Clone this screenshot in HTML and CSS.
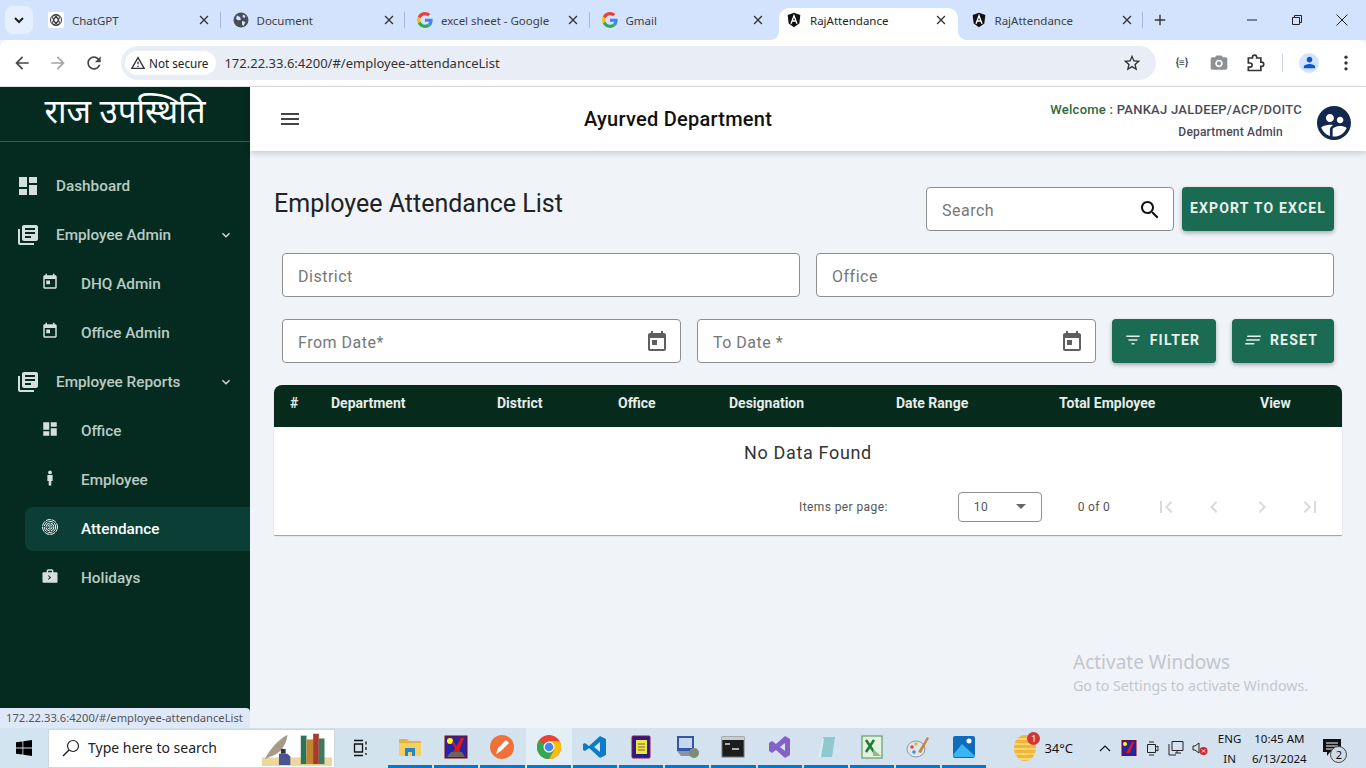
FILE: index.html
```html
<!DOCTYPE html>
<html lang="en">
<head>
    <meta charset="UTF-8">
    <title>RajAttendance</title>
    <link rel="stylesheet" href="styles.css">
</head>
<body>
    <svg class="sprite" aria-hidden="true">
        <symbol id="i-close" viewBox="0 0 16 16"><path d="M3.500 3.500l9 9M12.500 3.500l-9 9" stroke="currentColor" stroke-width="1.500" fill="none"/></symbol>
        <symbol id="i-google" viewBox="0 0 48 48"><path fill="#EA4335" d="M24 9.500c3.500 0 6.700 1.200 9.200 3.600l6.900-6.900C35.900 2.400 30.400 0 24 0 14.600 0 6.500 5.400 2.600 13.200l8 6.200C12.500 13.700 17.800 9.500 24 9.500z"/><path fill="#4285F4" d="M47 24.500c0-1.600-.1-3.100-.4-4.500H24v9h12.900c-.6 3-2.200 5.500-4.700 7.200l7.700 6C44.400 38 47 31.800 47 24.500z"/><path fill="#FBBC05" d="M10.600 28.600c-.5-1.400-.8-3-.8-4.600s.3-3.200.8-4.600l-8-6.200C.9 16.500 0 20.100 0 24s.9 7.500 2.600 10.800l8-6.200z"/><path fill="#34A853" d="M24 48c6.500 0 11.900-2.100 15.900-5.800l-7.700-6c-2.100 1.400-4.900 2.300-8.200 2.300-6.200 0-11.500-4.200-13.400-9.900l-8 6.200C6.500 42.600 14.600 48 24 48z"/></symbol>
        <symbol id="i-angular" viewBox="0 0 24 24"><path fill="#111" d="M12 1L2.500 4.400 4 17.400 12 23l8-5.600 1.500-13z"/><path d="M7.500 17.500L12 5.500l4.500 12M9.300 13.500h5.400" stroke="#fff" stroke-width="2" fill="none"/></symbol>
        <symbol id="i-today" viewBox="0 0 24 24"><path d="M19 3h-1V1h-2v2H8V1H6v2H5c-1.100 0-2 .9-2 2v14c0 1.100.9 2 2 2h14c1.100 0 2-.9 2-2V5c0-1.100-.9-2-2-2zm0 16H5V8h14v11zM7 10h5v5H7z"/></symbol>
        <symbol id="i-books" viewBox="0 0 24 24"><path d="M4 6H2v14c0 1.100.9 2 2 2h14v-2H4V6zm16-4H8c-1.100 0-2 .9-2 2v12c0 1.100.9 2 2 2h12c1.100 0 2-.9 2-2V4c0-1.100-.9-2-2-2zm-1 9H9V9h10v2zm-4 4H9v-2h6v2zm4-8H9V5h10v2z"/></symbol>
        <symbol id="i-dashboard" viewBox="0 0 24 24"><path d="M3 13h8V3H3v10zm0 8h8v-6H3v6zm10 0h8V11h-8v10zm0-18v6h8V3h-8z"/></symbol>
        <symbol id="i-more" viewBox="0 0 24 24"><path d="M16.590 8.590L12 13.170 7.410 8.590 6 10l6 6 6-6z"/></symbol>
    </svg>

    <!-- browser tabs -->
    <div class="tabstrip">
        <div class="tab-menu"><svg class="ic16" viewBox="0 0 16 16"><path d="M4 6l4 4 4-4" stroke="#1f1f1f" stroke-width="2" fill="none"/></svg></div>
        <div class="tab">
            <svg class="fav" viewBox="0 0 16 16"><rect width="16" height="16" rx="2" fill="#fff"/><g fill="none" stroke="#333" stroke-width="1"><circle cx="8" cy="8" r="5.500"/><circle cx="8" cy="8" r="2.500"/><ellipse cx="8" cy="8" rx="5" ry="2.200" transform="rotate(60 8 8)"/><ellipse cx="8" cy="8" rx="5" ry="2.200" transform="rotate(-60 8 8)"/></g></svg>
            <span class="tab-title">ChatGPT</span>
            <svg class="tab-x"><use href="#i-close"/></svg>
        </div>
        <div class="tab">
            <svg class="fav" viewBox="0 0 16 16"><circle cx="8" cy="8" r="7.500" fill="#4a4f57"/><path d="M4 3.500l3 1.500 1 2.500-2.500 1L3 7zM9 9l3.500 1-2 4-1.500-1.500zM10 2.500l2.500 1.500-1 2-2-1z" fill="#d3e3fd"/></svg>
            <span class="tab-title">Document</span>
            <svg class="tab-x"><use href="#i-close"/></svg>
        </div>
        <div class="tab">
            <svg class="fav"><use href="#i-google"/></svg>
            <span class="tab-title">excel sheet - Google</span>
            <svg class="tab-x"><use href="#i-close"/></svg>
        </div>
        <div class="tab">
            <svg class="fav"><use href="#i-google"/></svg>
            <span class="tab-title">Gmail</span>
            <svg class="tab-x"><use href="#i-close"/></svg>
        </div>
        <div class="tab tab-active">
            <svg class="fav"><use href="#i-angular"/></svg>
            <span class="tab-title">RajAttendance</span>
            <svg class="tab-x"><use href="#i-close"/></svg>
        </div>
        <div class="tab">
            <svg class="fav"><use href="#i-angular"/></svg>
            <span class="tab-title">RajAttendance</span>
            <svg class="tab-x"><use href="#i-close"/></svg>
        </div>
        <svg class="tab-plus" viewBox="0 0 16 16"><path d="M8 2v12M2 8h12" stroke="#333" stroke-width="1.600"/></svg>
        <div class="win-btns">
            <svg class="ic16" viewBox="0 0 16 16"><path d="M3 8h10" stroke="#222" stroke-width="1"/></svg>
            <svg class="ic16" viewBox="0 0 16 16"><path d="M3.500 5.500h7v7h-7zM5.500 5.500v-2h7v7h-2" stroke="#222" stroke-width="1" fill="none"/></svg>
            <svg class="ic16" viewBox="0 0 16 16"><path d="M2.500 2.500l11 11M13.500 2.500l-11 11" stroke="#222" stroke-width="1"/></svg>
        </div>
    </div>

    <!-- address bar -->
    <div class="toolbar">
        <svg class="tb-icon" viewBox="0 0 24 24"><path fill="#474747" d="M20 11H7.830l5.590-5.590L12 4l-8 8 8 8 1.410-1.410L7.830 13H20v-2z"/></svg>
        <svg class="tb-icon" viewBox="0 0 24 24"><path fill="#a3a6ab" d="M12 4l-1.410 1.410L16.170 11H4v2h12.170l-5.580 5.590L12 20l8-8z"/></svg>
        <svg class="tb-icon" viewBox="0 0 24 24"><path fill="#474747" d="M17.650 6.350C16.200 4.900 14.210 4 12 4c-4.420 0-7.990 3.580-7.990 8s3.570 8 7.990 8c3.730 0 6.840-2.550 7.730-6h-2.080c-.82 2.330-3.040 4-5.650 4-3.310 0-6-2.690-6-6s2.690-6 6-6c1.660 0 3.140.69 4.220 1.780L13 11h7V4l-2.350 2.350z"/></svg>
        <div class="omnibox">
            <div class="chip">
                <svg class="ic16" viewBox="0 0 24 24"><path fill="#333" d="M12 5.990L19.530 19H4.470L12 5.990M12 2L1 21h22L12 2zm1 14h-2v2h2v-2zm0-6h-2v4h2v-4z"/></svg>
                <span>Not secure</span>
            </div>
            <span class="url">172.22.33.6:4200/#/employee-attendanceList</span>
            <svg class="star" viewBox="0 0 24 24"><path fill="#333" d="M22 9.240l-7.190-.62L12 2 9.190 8.630 2 9.240l5.460 4.730L5.820 21 12 17.270 18.180 21l-1.630-7.030L22 9.240zM12 15.400l-3.760 2.270 1-4.280-3.320-2.880 4.380-.38L12 6.100l1.710 4.040 4.380.38-3.320 2.880 1 4.280L12 15.400z"/></svg>
        </div>
        <div class="tb-right">
            <span class="ext-json">{≡}</span>
            <svg class="ic20" viewBox="0 0 24 24"><path fill="#8d9094" d="M9 3L7.170 5H4c-1.100 0-2 .9-2 2v11c0 1.100.9 2 2 2h16c1.100 0 2-.9 2-2V7c0-1.100-.9-2-2-2h-3.170L15 3H9zm3 14c-2.480 0-4.500-2.020-4.500-4.500S9.520 8 12 8s4.500 2.020 4.500 4.500S14.480 17 12 17zm0-7a2.500 2.500 0 100 5 2.500 2.500 0 000-5z"/></svg>
            <svg class="ic20" viewBox="0 0 24 24"><path fill="none" stroke="#333" stroke-width="2" d="M4 6h5V5a2.500 2.500 0 015 0v1h5v5h1a2.500 2.500 0 010 5h-1v5H4v-4h2a2.500 2.500 0 000-5H4z"/></svg>
            <span class="tb-sep"></span>
            <span class="profile"><svg class="ic20" viewBox="0 0 24 24"><path fill="#0b57d0" d="M12 12c2.210 0 4-1.790 4-4s-1.790-4-4-4-4 1.790-4 4 1.790 4 4 4zm0 2c-2.670 0-8 1.340-8 4v2h16v-2c0-2.660-5.330-4-8-4z"/></svg></span>
            <svg class="ic20" viewBox="0 0 24 24"><g fill="#333"><circle cx="12" cy="5" r="2"/><circle cx="12" cy="12" r="2"/><circle cx="12" cy="19" r="2"/></g></svg>
        </div>
    </div>

    <div class="app">
        <aside class="sidebar">
            <div class="logo">राज उपस्थिति</div>
            <nav class="nav">
                <a class="nav-item"><svg class="nav-ic"><use href="#i-dashboard"/></svg>Dashboard</a>
                <a class="nav-item"><svg class="nav-ic"><use href="#i-books"/></svg>Employee Admin<svg class="nav-more"><use href="#i-more"/></svg></a>
                <a class="nav-item sub"><svg class="sub-ic"><use href="#i-today"/></svg>DHQ Admin</a>
                <a class="nav-item sub"><svg class="sub-ic"><use href="#i-today"/></svg>Office Admin</a>
                <a class="nav-item"><svg class="nav-ic"><use href="#i-books"/></svg>Employee Reports<svg class="nav-more"><use href="#i-more"/></svg></a>
                <a class="nav-item sub"><svg class="sub-ic"><use href="#i-dashboard"/></svg>Office</a>
                <a class="nav-item sub"><svg class="sub-ic" viewBox="0 0 24 24"><circle cx="12" cy="4.500" r="2.500"/><path d="M8.500 8h7v8h-1.800v6h-3.400v-6H8.500z"/></svg>Employee</a>
                <a class="nav-item sub active"><svg class="sub-ic" viewBox="0 0 24 24"><g fill="none" stroke="currentColor" stroke-width="1.300" stroke-dasharray="7 1.200"><circle cx="12" cy="12" r="10"/><circle cx="12" cy="12" r="7.600"/><circle cx="12" cy="12" r="5.200"/><circle cx="12" cy="12" r="2.800"/></g><circle cx="12" cy="12" r="1"/></svg>Attendance</a>
                <a class="nav-item sub"><svg class="sub-ic" viewBox="0 0 24 24"><path d="M9 3h6l1.500 1.500V7H21a1 1 0 011 1v12a1 1 0 01-1 1H3a1 1 0 01-1-1V8a1 1 0 011-1h4.500V4.500zm.500 2v2h5V5zM10 11l3.500 3-3.500 3-.8-.8 2.200-2.200-2.200-2.200z" fill-rule="evenodd"/></svg>Holidays</a>
            </nav>
        </aside>

        <div class="content">
            <header class="topbar">
                <svg class="menu-btn" viewBox="0 0 24 24"><path d="M3 18h18v-2H3v2zm0-5h18v-2H3v2zm0-7v2h18V6H3z"/></svg>
                <div class="dept">Ayurved Department</div>
                <div class="user">
                    <div class="user-name"><span class="welcome">Welcome :</span> PANKAJ JALDEEP/ACP/DOITC</div>
                    <div class="user-role">Department Admin</div>
                </div>
                <svg class="avatar" viewBox="2 2 20 20"><path d="M11.990 2c-5.520 0-10 4.480-10 10s4.480 10 10 10 10-4.480 10-10-4.480-10-10-10zm3.610 6.340c1.070 0 1.930.86 1.930 1.930 0 1.070-.86 1.930-1.930 1.930-1.070 0-1.930-.86-1.930-1.930-.01-1.070.86-1.930 1.930-1.930zm-6-1.580c1.300 0 2.360 1.060 2.360 2.360 0 1.300-1.060 2.360-2.360 2.360s-2.360-1.060-2.360-2.360c0-1.310 1.050-2.360 2.360-2.360zm0 9.130v3.750c-2.400-.75-4.300-2.600-5.140-4.960 1.050-1.120 3.670-1.690 5.140-1.690.53 0 1.200.08 1.900.22-1.640.87-1.900 2.020-1.900 2.680zM11.990 20c-.27 0-.53-.01-.79-.04v-4.070c0-1.420 2.940-2.130 4.400-2.130 1.070 0 2.920.39 3.840 1.150-1.170 2.970-4.060 5.090-7.450 5.090z"/></svg>
            </header>

            <main class="page">
                <div class="page-head">
                    <h1>Employee Attendance List</h1>
                    <div class="field search-field">
                        <span>Search</span>
                        <svg class="field-ic dark" viewBox="0 0 24 24"><path d="M15.500 14h-.79l-.28-.27C15.410 12.590 16 11.110 16 9.500 16 5.910 13.090 3 9.500 3S3 5.910 3 9.500 5.910 16 9.500 16c1.610 0 3.090-.59 4.230-1.570l.27.28v.79l5 4.990L20.490 19l-4.990-5zm-6 0C7.010 14 5 11.990 5 9.500S7.010 5 9.500 5 14 7.010 14 9.500 11.990 14 9.500 14z"/></svg>
                    </div>
                    <button class="btn btn-export">EXPORT TO EXCEL</button>
                </div>
                <div class="filters">
                    <div class="field"><span>District</span></div>
                    <div class="field"><span>Office</span></div>
                </div>
                <div class="filters">
                    <div class="field"><span>From Date*</span><svg class="field-ic"><use href="#i-today"/></svg></div>
                    <div class="field"><span>To Date *</span><svg class="field-ic"><use href="#i-today"/></svg></div>
                    <button class="btn btn-filter"><svg class="btn-ic" viewBox="0 0 24 24"><path d="M10 18h4v-2h-4v2zM3 6v2h18V6H3zm3 7h12v-2H6v2z"/></svg>FILTER</button>
                    <button class="btn btn-reset"><svg class="btn-ic" viewBox="0 0 24 24"><path d="M3 18h12v-2H3v2zM3 6v2h18V6H3zm0 7h18v-2H3v2z"/></svg>RESET</button>
                </div>

                <div class="table-card">
                    <table class="data-table">
                        <thead>
                            <tr>
                                <th>#</th>
                                <th>Department</th>
                                <th>District</th>
                                <th>Office</th>
                                <th>Designation</th>
                                <th>Date Range</th>
                                <th>Total Employee</th>
                                <th>View</th>
                            </tr>
                        </thead>
                        <tbody>
                            <tr><td colspan="8">No Data Found</td></tr>
                        </tbody>
                    </table>
                    <div class="paginator">
                        <span class="pg-label">Items per page:</span>
                        <div class="pg-select"><span>10</span><i class="caret"></i></div>
                        <span class="pg-range">0 of 0</span>
                        <div class="pg-btns">
                            <svg viewBox="0 0 24 24"><path d="M18.410 16.590L13.820 12l4.590-4.590L17 6l-6 6 6 6zM6 6h2v12H6z"/></svg>
                            <svg viewBox="0 0 24 24"><path d="M15.410 7.410L14 6l-6 6 6 6 1.410-1.410L10.830 12z"/></svg>
                            <svg viewBox="0 0 24 24"><path d="M10 6L8.590 7.410 13.170 12l-4.580 4.590L10 18l6-6z"/></svg>
                            <svg viewBox="0 0 24 24"><path d="M5.590 7.410L10.180 12l-4.590 4.590L7 18l6-6-6-6zM16 6h2v12h-2z"/></svg>
                        </div>
                    </div>
                </div>
            </main>
        </div>

        <div class="status-bubble">172.22.33.6:4200/#/employee-attendanceList</div>
        <div class="watermark">
            <div class="wm-big">Activate Windows</div>
            <div>Go to Settings to activate Windows.</div>
        </div>
    </div>

    <!-- windows taskbar -->
    <div class="taskbar">
        <div class="start"><svg class="ic16" viewBox="0 0 16 16"><path fill="#000" d="M0 2.300l6.500-.9v6.200H0zM7.300 1.300L16 0v7.600H7.300zM0 8.400h6.500v6.200L0 13.700zM7.300 8.400H16V16l-8.700-1.300z"/></svg></div>
        <div class="tb-search">
            <svg class="ic20" viewBox="0 0 20 20"><circle cx="12" cy="8" r="5.500" fill="none" stroke="#222" stroke-width="1.200"/><path d="M8 12l-6 6" stroke="#222" stroke-width="1.400"/></svg>
            <span>Type here to search</span>
            <svg class="books" viewBox="0 0 74 39">
                <rect y="30" width="74" height="9" fill="#ecd7a0"/>
                <path d="M3 32C8 22 16 12 27 6c-1 10-7 20-18 23z" fill="#a89a88"/>
                <path d="M18 26h9l3 3v9H18z" fill="#4a5590"/><rect x="20" y="21" width="5" height="5" fill="#333"/>
                <rect x="41" y="7" width="6" height="30" fill="#2d7358"/><rect x="47" y="11" width="7" height="26" fill="#c2842f"/>
                <rect x="54" y="5" width="6" height="32" fill="#a93a2e"/><rect x="60" y="10" width="6" height="27" fill="#3a7a5e"/>
            </svg>
        </div>
        <div class="task-view"><svg class="ic20" viewBox="0 0 20 20"><path d="M4 2.500h9M4 17.500h9M4.500 6h8v8h-8z M16 3.500v3M16 9v3M16 15v2" stroke="#111" stroke-width="1.300" fill="none"/></svg></div>
        <div class="apps">
            <div class="app-ic run"><svg viewBox="0 0 24 24"><path fill="#e8b33f" d="M1 4h8l2 2h12v15H1z"/><path fill="#f5cf62" d="M1 8h22v13H1z"/><path fill="#1e88c9" d="M7 13h10v8h-3v-4h-4v4H7z"/></svg></div>
            <div class="app-ic run"><svg viewBox="0 0 24 24"><rect x="1" y="1" width="22" height="22" fill="#2525a8" stroke="#900"/><circle cx="6" cy="6" r="3" fill="#ff0"/><path d="M8 19L17 3h3l-6 16z" fill="#e01818"/><path d="M9 6l8 12h-3L8 8z" fill="#e01818"/><path d="M3 22l4-5h11l3 5z" fill="#666"/></svg></div>
            <div class="app-ic run"><svg viewBox="0 0 24 24"><circle cx="12" cy="12" r="12" fill="#f0703a"/><path d="M6 19l2-6 8-8 3 3-8 8z" fill="#fff"/></svg></div>
            <div class="app-ic run on"><svg viewBox="0 0 24 24"><circle cx="12" cy="12" r="12" fill="#ea4335"/><path d="M12 12L1.600 18A12 12 0 012 5.500z" fill="#34a853"/><path d="M12 24A12 12 0 011.600 18L7 9l5 3 5.200 3z" fill="#34a853"/><path d="M12 24a12 12 0 0010.400-18H12l5.200 9z" fill="#fbbc05"/><circle cx="12" cy="12" r="5.500" fill="#fff"/><circle cx="12" cy="12" r="4.300" fill="#4285f4"/></svg></div>
            <div class="app-ic run"><svg viewBox="0 0 24 24"><path fill="#0a7cc8" d="M17 1l6 3v16l-6 3L6 13l-4 3-2-1V9l2-1 4 3zm0 6l-6 5 6 5z"/></svg></div>
            <div class="app-ic run"><svg viewBox="0 0 24 24"><rect x="3" y="1" width="18" height="22" rx="1" fill="#20208c" stroke="#a01040"/><rect x="7" y="5" width="11" height="14" fill="#f5e23a"/><path d="M9 9h7M9 12h7M9 15h7" stroke="#665" stroke-width="1"/></svg></div>
            <div class="app-ic run"><svg viewBox="0 0 24 24"><rect x="2" y="1" width="17" height="15" fill="#3358a8"/><rect x="4" y="3" width="13" height="10" fill="#c7d6f2"/><path d="M2 16h14l3 5H6z" fill="#8a93a5"/><circle cx="19" cy="18" r="5" fill="#7d8c76"/></svg></div>
            <div class="app-ic run"><svg viewBox="0 0 24 24"><rect x="1" y="2" width="22" height="20" fill="#1d1d1d" stroke="#777"/><path d="M1 2h22v3H1z" fill="#ccc"/><path d="M4 9h5M11 14h7" stroke="#ddd" stroke-width="1.500"/></svg></div>
            <div class="app-ic run"><svg viewBox="0 0 24 24"><path fill="#8661c5" d="M17 1l5 3v16l-5 3-9-8-4 3-3-2V8l3-2 4 3zm0 7l-5 4 5 4z"/></svg></div>
            <div class="app-ic run"><svg viewBox="0 0 24 24"><path fill="#8fc9cf" d="M8 2h13l-3 20H3z"/><path fill="#d9edf0" d="M8 2l2 2-3 18H3z"/></svg></div>
            <div class="app-ic run"><svg viewBox="0 0 24 24"><rect x="2" y="1" width="20" height="22" fill="#e4f1df" stroke="#4b8f4b"/><path d="M6 5l8 12M14 5L6 17" stroke="#1b7a35" stroke-width="2.500"/><path d="M13 14l8 7h-8z" fill="#8fb98f"/></svg></div>
            <div class="app-ic run"><svg viewBox="0 0 24 24"><ellipse cx="10" cy="14" rx="9" ry="8" fill="#dfe6ee" stroke="#8a9aac"/><circle cx="6" cy="12" r="1.800" fill="#d94a3a"/><circle cx="10" cy="9" r="1.800" fill="#e8b33f"/><circle cx="8" cy="17" r="1.800" fill="#3f8fd9"/><path d="M12 17L21 2l2 1-8 15z" fill="#c58a3a"/></svg></div>
            <div class="app-ic run"><svg viewBox="0 0 24 24"><rect x="1" y="1" width="22" height="22" rx="2" fill="#0f6cbd"/><path d="M1 20l9-11 13 12v1H3z" fill="#3bb5ef"/><circle cx="17" cy="6" r="2.500" fill="#fff"/></svg></div>
        </div>
        <div class="weather">
            <span class="wx-ic"><i class="wx-badge">1</i></span>
            <span>34°C</span>
        </div>
        <div class="tray">
            <svg class="tray-ic" viewBox="0 0 16 16"><path d="M3 11l5-5 5 5" fill="none" stroke="#111" stroke-width="1.200"/></svg>
            <svg class="tray-ic" viewBox="0 0 16 16"><rect x="1" y="0" width="14" height="16" fill="#2525a8" stroke="#900"/><circle cx="4" cy="4" r="2" fill="#ff0"/><path d="M5 13l6-11h2l-4 11z" fill="#e01818"/></svg>
            <svg class="tray-ic" viewBox="0 0 16 16"><path d="M3.500 4.500h8v8h-8zM5 2h5M5 15h5M12 7l2-1v5l-2-1" fill="none" stroke="#222"/></svg>
            <svg class="tray-ic" viewBox="0 0 16 16"><path d="M4 1.500h11v9H4zM1 4v11M1 15h7M7 13h6M9 11v2" fill="none" stroke="#222"/></svg>
            <svg class="tray-ic" viewBox="0 0 16 16"><path d="M1 6h2l4-3v10L3 10H1z" fill="none" stroke="#222"/><circle cx="11.500" cy="11" r="4" fill="#d8232a"/><path d="M10 9.500l3 3M13 9.500l-3 3" stroke="#fff"/></svg>
        </div>
        <div class="lang"><div>ENG</div><div>IN</div></div>
        <div class="clock"><div>10:45 AM</div><div>6/13/2024</div></div>
        <div class="notif">
            <svg class="ic20" viewBox="0 0 20 20"><path d="M1 1h18v13H8l-3 4v-4H1z" fill="#111"/><path d="M4 5h12M4 8h12M4 11h8" stroke="#fff"/></svg>
            <span class="notif-count">2</span>
        </div>
    </div>
</body>
</html>
```

FILE: styles.css
```css
* {
    box-sizing: border-box;
}
html, body {
    margin: 0;
    height: 100%;
    overflow: hidden;
}
body {
    display: flex;
    flex-direction: column;
    width: 1366px;
    height: 768px;
    font-family: Roboto, "Noto Sans", sans-serif;
    background-color: #f0f3f8;
}
.sprite {
    display: none;
}
.ic16 {
    width: 16px;
    height: 16px;
    flex: none;
}
.ic20 {
    width: 20px;
    height: 20px;
    flex: none;
}

/* tab strip */
.tabstrip {
    display: flex;
    align-items: flex-end;
    height: 40px;
    background-color: #d3e3fd;
    font-family: "Noto Sans", sans-serif;
    font-size: 11.5px;
    color: #3c4043;
}
.tab-menu {
    display: flex;
    align-items: center;
    justify-content: center;
    width: 28px;
    height: 28px;
    margin: 0 3px 6px 5px;
    background-color: #e6effd;
    border-radius: 8px;
}
.tab {
    display: flex;
    align-items: center;
    width: 184.5px;
    height: 32px;
    padding: 0 9.5px 8px 12px;
    position: relative;
    flex: none;
}
.tab::after {
    content: "";
    position: absolute;
    right: 0;
    top: 4px;
    height: 16px;
    width: 1px;
    background-color: #a3b8d9;
}
.tab-active {
    width: 179px;
    margin: 0 0.5px 0 5px;
    padding-left: 7px;
    padding-right: 10px;
    background-color: #fff;
    border-radius: 10px 10px 0 0;
    color: #1f1f1f;
}
.tab:nth-child(5)::after {
    display: none;
}
/* little flares at the foot of the active tab */
.tab-active::before,
.tab-active::after {
    content: "";
    display: block;
    position: absolute;
    top: auto;
    bottom: 0;
    width: 8px;
    height: 8px;
    background: radial-gradient(circle at 0 0, transparent 7.5px, #fff 8px);
}
.tab-active::before {
    left: -8px;
}
.tab-active::after {
    right: -8px;
    background: radial-gradient(circle at 100% 0, transparent 7.5px, #fff 8px);
}
.fav {
    width: 16px;
    height: 16px;
    flex: none;
    margin-right: 8px;
}
.tab-title {
    flex: 1;
    overflow: hidden;
    white-space: nowrap;
}
.tab-x {
    width: 14px;
    height: 14px;
    flex: none;
    margin-left: 4px;
    color: #333;
}
.tab-plus {
    width: 14px;
    height: 14px;
    margin: 0 0 13px 10px;
}
.win-btns {
    display: flex;
    gap: 29px;
    margin: 0 0 12px auto;
    padding-right: 16px;
}

/* address bar */
.toolbar {
    display: flex;
    align-items: center;
    height: 47px;
    padding: 0 12px 1px 12px;
    background-color: #fff;
    border-bottom: 1px solid #dfe1e5;
    border-radius: 8px 8px 0 0;
}
.tb-icon {
    width: 20px;
    height: 20px;
    flex: none;
    margin-right: 16px;
}
.omnibox {
    display: flex;
    align-items: center;
    flex: none;
    width: 1035px;
    height: 34px;
    margin-left: 1px;
    padding: 0 14px 0 4px;
    background-color: #e9edf6;
    border-radius: 17px;
}
.chip {
    display: flex;
    align-items: center;
    gap: 3px;
    height: 24px;
    padding: 0 8px 0 5px;
    background-color: #fff;
    border-radius: 12px;
    font-family: "Noto Sans", sans-serif;
    font-size: 11.7px;
    color: #222;
}
.url {
    margin-left: 8px;
    font-family: "Noto Sans", sans-serif;
    font-size: 13px;
    color: #333;
}
.star {
    width: 20px;
    height: 20px;
    margin-left: auto;
}
.tb-right {
    display: flex;
    align-items: center;
    margin-left: 16px;
    gap: 16.5px;
}
.ext-json {
    width: 20px;
    font-size: 10px;
    font-weight: 700;
    color: #444;
    text-align: center;
}
.tb-sep {
    width: 1px;
    height: 18px;
    background-color: #c9d6ea;
}
.profile {
    display: flex;
    align-items: center;
    justify-content: center;
    width: 20px;
    height: 20px;
    background-color: #d3e3fd;
    border-radius: 50%;
}
.profile .ic20 {
    width: 17px;
    height: 17px;
}

/* app */
.app {
    display: flex;
    flex: 1;
    min-height: 0;
    position: relative;
}
.sidebar {
    width: 250px;
    flex: none;
    background-color: #052b20;
}
.logo {
    height: 55px;
    border-bottom: 1px solid #3d5a50;
    font-family: "Noto Sans", "Noto Sans CJK SC", sans-serif;
    font-size: 33px;
    line-height: 48px;
    color: #fff;
    text-align: center;
}
.nav {
    display: flex;
    flex-direction: column;
    gap: 5px;
    padding: 22px 0 0 0;
}
.nav-item {
    display: flex;
    align-items: center;
    height: 44px;
    padding-left: 16px;
    font-size: 15.3px;
    font-weight: 500;
    color: #b9cbc5;
    fill: #d5dfdc;
}
.nav-item.sub {
    margin-left: 25px;
    padding-left: 16px;
    border-radius: 8px 0 0 8px;
}
.nav-item.active {
    background-color: #0b3f35;
    color: #fff;
    fill: #fff;
}
.nav-ic {
    width: 24px;
    height: 24px;
    flex: none;
    margin-right: 16px;
}
.sub-ic {
    width: 18px;
    height: 18px;
    flex: none;
    margin: -4px 22px 0 0;
    color: #fff;
}
.nav-more {
    width: 16px;
    height: 16px;
    margin-left: auto;
    margin-right: 16px;
}

.content {
    display: flex;
    flex-direction: column;
    flex: 1;
    min-width: 0;
}
.topbar {
    display: flex;
    align-items: center;
    flex: none;
    height: 64px;
    padding-left: 28px;
    background-color: #fff;
    box-shadow: 0 2px 6px rgba(0, 0, 0, .18);
    position: relative;
}
.menu-btn {
    width: 24px;
    height: 24px;
    fill: #444;
}
.dept {
    margin-left: 282px;
    font-size: 20px;
    font-weight: 500;
    color: #111;
    letter-spacing: .25px;
}
.user {
    margin-left: auto;
    padding-top: 3px;
    font-size: 13px;
    font-weight: 500;
    color: #4a4a55;
    letter-spacing: .25px;
    text-align: right;
}
.user-name {
    margin-bottom: 8px;
}
.welcome {
    color: #2c6a3a;
}
.user-role {
    padding-right: 19px;
    font-size: 12px;
    letter-spacing: .2px;
}
.avatar {
    width: 34px;
    height: 34px;
    margin: 8px 15px 0 15px;
    fill: #14284f;
}

.page {
    flex: 1;
    padding: 36px 24px 0 24px;
}
.page-head {
    display: flex;
    align-items: flex-start;
    margin-bottom: 22px;
    padding-right: 8px;
}
.page-head h1 {
    flex: 1;
    margin: 0;
    font-size: 25px;
    font-weight: 400;
    line-height: 34px;
    color: #222;
}
.field {
    display: flex;
    align-items: center;
    flex: 1;
    height: 44px;
    padding: 2px 11px 0 15px;
    background-color: #fff;
    border: 1px solid #8f8f8f;
    border-radius: 4px;
    font-size: 16px;
    letter-spacing: .5px;
    color: #777;
}
.field span {
    flex: 1;
}
.search-field {
    flex: none;
    width: 248px;
    margin-right: 8px;
}
.field-ic {
    width: 24px;
    height: 24px;
    fill: #5f5f5f;
}
.field-ic.dark {
    fill: #111;
}
.filters {
    display: flex;
    gap: 16px;
    margin: 0 8px 22px 8px;
}
.btn {
    display: flex;
    align-items: center;
    justify-content: center;
    flex: none;
    height: 44px;
    padding: 0 0 2px 0;
    background-color: #1b6b52;
    border: 0;
    border-radius: 4px;
    box-shadow: 0 2px 4px rgba(0, 0, 0, .3);
    font-family: Roboto, sans-serif;
    font-size: 14px;
    font-weight: 700;
    letter-spacing: 1.2px;
    color: #e8f0ed;
}
.btn-export {
    width: 152px;
}
.btn-filter {
    width: 104px;
    padding-right: 4px;
}
.btn-reset {
    width: 102px;
    padding-right: 4px;
}
.btn-ic {
    width: 18px;
    height: 18px;
    margin-right: 8px;
    fill: #e8f0ed;
}
.btn-reset .btn-ic {
    transform: skewX(-15deg);
}

.table-card {
    height: 150px;
    background-color: #fff;
    border-radius: 8px 8px 0 0;
    box-shadow: 0 1px 1px rgba(0, 0, 0, .35);
}
.data-table {
    width: 100%;
    border-collapse: collapse;
    table-layout: fixed;
}
.data-table th {
    height: 42px;
    padding: 0 0 6px 16px;
    background-color: #062b1d;
    font-size: 14px;
    font-weight: 700;
    color: #e6ece9;
    text-align: left;
}
.data-table th:first-child {
    border-top-left-radius: 8px;
}
.data-table th:last-child {
    border-top-right-radius: 8px;
}
.data-table th:nth-child(1) { width: 41px; }
.data-table th:nth-child(2) { width: 166px; }
.data-table th:nth-child(3) { width: 121px; }
.data-table th:nth-child(4) { width: 111px; }
.data-table th:nth-child(5) { width: 167px; }
.data-table th:nth-child(6) { width: 163px; }
.data-table th:nth-child(7) { width: 201px; }
.data-table th:nth-child(8) { width: 98px; }
.data-table td {
    height: 51px;
    padding: 0 0 1px 0;
    font-size: 18px;
    letter-spacing: .65px;
    color: #333;
    text-align: center;
}
.paginator {
    display: flex;
    align-items: center;
    justify-content: flex-end;
    height: 57px;
    padding: 0 8px 0 0;
    font-size: 12px;
    color: #555;
}
.pg-label {
    letter-spacing: .4px;
    margin-right: 70px;
}
.pg-select {
    display: flex;
    align-items: center;
    justify-content: space-between;
    width: 84px;
    height: 30px;
    padding: 0 15px;
    border: 1px solid #8f8f8f;
    border-radius: 4px;
    letter-spacing: .4px;
}
.caret {
    width: 0;
    height: 0;
    border-left: 5px solid transparent;
    border-right: 5px solid transparent;
    border-top: 5px solid #666;
}
.pg-range {
    margin: 0 32px 0 36px;
    letter-spacing: .3px;
}
.pg-btns {
    display: flex;
}
.pg-btns svg {
    width: 24px;
    height: 24px;
    margin: 0 12px;
    fill: #d8dadc;
}

/* overlays */
.status-bubble {
    position: absolute;
    left: 0;
    bottom: 0;
    width: 250px;
    height: 20px;
    padding: 2px 0 0 6px;
    background-color: #dee8f8;
    border-top-right-radius: 4px;
    font-family: "Noto Sans", sans-serif;
    font-size: 11.2px;
    color: #555;
    white-space: nowrap;
}
.watermark {
    position: absolute;
    left: 1073px;
    top: 562px;
    font-family: "Noto Sans", sans-serif;
    font-size: 14.2px;
    line-height: 19px;
    color: #c3c7cd;
}
.wm-big {
    font-size: 19px;
    line-height: 27px;
}

/* taskbar */
.taskbar {
    display: flex;
    align-items: center;
    flex: none;
    height: 40px;
    background: linear-gradient(to right, #d1e4ef, #d5e1ee);
    font-family: "Noto Sans", sans-serif;
    font-size: 11.5px;
    color: #111;
}
.start {
    display: flex;
    align-items: center;
    justify-content: center;
    width: 48px;
    height: 40px;
}
.tb-search {
    display: flex;
    align-items: center;
    width: 287px;
    height: 39px;
    margin-top: 1px;
    padding: 0 0 2px 12px;
    background-color: #fff;
    border: 1px solid #cfd6dc;
    font-size: 14px;
    color: #222;
}
.tb-search span {
    margin-left: 7px;
}
.books {
    width: 74px;
    height: 37px;
    margin-left: auto;
}
.task-view {
    display: flex;
    justify-content: center;
    width: 50px;
}
.apps {
    display: flex;
    height: 40px;
    margin-left: 2px;
}
.app-ic {
    display: flex;
    align-items: center;
    justify-content: center;
    width: 46.2px;
    height: 40px;
    border-bottom: 3px solid transparent;
}
.app-ic svg {
    width: 24px;
    height: 24px;
}
.app-ic.run {
    border-image: linear-gradient(to right, transparent 4px, #0078d4 4px, #0078d4 42px, transparent 42px) 3;
}
.app-ic.on {
    background-color: #e4eff5;
}
.weather {
    display: flex;
    align-items: center;
    gap: 8px;
    margin-left: 27px;
    font-size: 13px;
}
.wx-ic {
    display: block;
    width: 22px;
    height: 26px;
    position: relative;
    background: repeating-linear-gradient(#f2b53a 0 3px, #f7d76e 3px 5px);
    border-radius: 50%;
}
.wx-badge {
    position: absolute;
    right: -4px;
    top: -3px;
    width: 13px;
    height: 13px;
    background-color: #d13438;
    border-radius: 50%;
    font-size: 9px;
    font-style: normal;
    line-height: 13px;
    color: #fff;
    text-align: center;
}
.tray {
    display: flex;
    align-items: center;
    gap: 7.7px;
    margin-left: 24px;
}
.tray-ic {
    width: 16px;
    height: 16px;
}
.lang {
    margin: 1px 0 0 10px;
    line-height: 20px;
    text-align: center;
}
.clock {
    width: 60px;
    margin: 1px 0 0 8px;
    line-height: 20px;
    text-align: center;
}
.notif {
    display: flex;
    width: 30px;
    margin-left: 13px;
    position: relative;
}
.notif-count {
    position: absolute;
    left: 8px;
    top: 8px;
    width: 17px;
    height: 17px;
    background-color: #cfdbe5;
    border: 1px solid #444;
    border-radius: 50%;
    font-size: 11px;
    line-height: 15px;
    text-align: center;
}
```
